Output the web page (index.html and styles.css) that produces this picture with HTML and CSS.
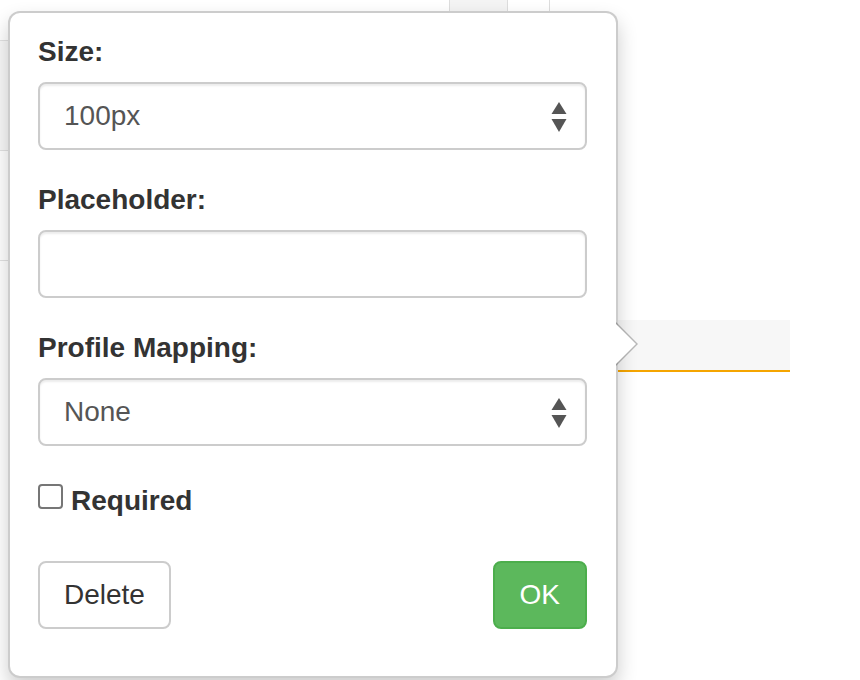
FILE: index.html
```html
<!DOCTYPE html>
<html lang="en">
<head>
<meta charset="utf-8">
<title>Field settings</title>
<link rel="stylesheet" href="styles.css">
</head>
<body>
<div class="app">
  <div class="toolbar">
    <div class="toolbar-space"></div>
    <div class="tool tool-active"></div>
    <div class="tool"></div>
    <div class="toolbar-rest"></div>
  </div>
  <div class="workspace">
    <div class="sidebar">
      <div class="side-item"></div>
      <div class="side-item"></div>
    </div>
    <div class="canvas">
      <div class="field-row"></div>
    </div>
  </div>

  <div class="popover">
    <span class="arrow"></span>
    <span class="arrow-inner"></span>
    <form class="popover-content">
      <div class="form-group">
        <label class="control-label">Size:</label>
        <div class="select">
          <span>100px</span>
          <svg class="spinner" width="16" height="30" viewBox="0 0 16 30" aria-hidden="true">
            <path d="M8 0 L15.5 12 L0.5 12 Z" fill="#555"/>
            <path d="M0.5 17 L15.5 17 L8 30 Z" fill="#555"/>
          </svg>
        </div>
      </div>
      <div class="form-group">
        <label class="control-label">Placeholder:</label>
        <div class="input"></div>
      </div>
      <div class="form-group">
        <label class="control-label">Profile Mapping:</label>
        <div class="select">
          <span>None</span>
          <svg class="spinner" width="16" height="30" viewBox="0 0 16 30" aria-hidden="true">
            <path d="M8 0 L15.5 12 L0.5 12 Z" fill="#555"/>
            <path d="M0.5 17 L15.5 17 L8 30 Z" fill="#555"/>
          </svg>
        </div>
      </div>
      <div class="checkbox">
        <span class="check-box"></span>
        <span class="check-label">Required</span>
      </div>
      <div class="actions">
        <span class="btn btn-default">Delete</span>
        <span class="btn btn-success">OK</span>
      </div>
    </form>
  </div>
</div>
</body>
</html>
```

FILE: styles.css
```css
* {
  box-sizing: border-box;
}

html, body {
  margin: 0;
  padding: 0;
  background: #fff;
}

body {
  font-family: "Liberation Sans", Arial, sans-serif;
  color: #333;
}

.app {
  position: relative;
  width: 860px;
  height: 680px;
  overflow: hidden;
}

/* Page behind the popover */
.toolbar {
  display: flex;
  width: 600px;
  height: 41px;
  border-bottom: 1px solid #e2e2e2;
}

.toolbar-space {
  width: 449px;
}

.tool {
  width: 42px;
  border-left: 1px solid #ddd;
}

.tool-active {
  width: 58px;
  background: #f4f4f4;
}

.toolbar-rest {
  flex: 1;
  border-left: 1px solid #ddd;
}

.workspace {
  display: flex;
}

.sidebar {
  width: 400px;
}

.side-item {
  height: 110px;
  border-bottom: 1px solid #e2e2e2;
}

.side-item:first-child {
  background: #f8f8f8;
}

.canvas {
  flex: 1;
  padding-top: 279px;
  padding-right: 70px;
}

.field-row {
  height: 52px;
  background: #f7f7f7;
  border-bottom: 2px solid #f5a500;
}

/* Popover */
.popover {
  position: absolute;
  left: 8px;
  top: 11px;
  width: 610px;
  background: #fff;
  border: 2px solid rgba(0, 0, 0, 0.2);
  border-radius: 12px;
  box-shadow: 0 10px 20px rgba(0, 0, 0, 0.2);
}

.arrow,
.arrow-inner {
  position: absolute;
  width: 0;
  height: 0;
  border-style: solid;
  border-color: transparent;
  border-right-width: 0;
}

.arrow {
  top: 309px;
  right: -22px;
  border-width: 22px 0 22px 22px;
  border-left-color: rgba(0, 0, 0, 0.25);
}

.arrow-inner {
  top: 311px;
  right: -20px;
  border-width: 20px 0 20px 20px;
  border-left-color: #fff;
}

.popover-content {
  margin: 0;
  padding: 19px 29px 17px 28px;
}

.form-group {
  margin-bottom: 30px;
}

.control-label {
  display: inline-block;
  margin-bottom: 10px;
  font-size: 28px;
  line-height: 40px;
  font-weight: bold;
  color: #333;
}

.input,
.select {
  height: 68px;
  padding: 12px 24px;
  border: 2px solid #ccc;
  border-radius: 8px;
  background: #fff;
  font-size: 28px;
  line-height: 40px;
  color: #555;
  box-shadow: inset 0 2px 2px rgba(0, 0, 0, 0.075);
}

.select {
  display: flex;
  align-items: center;
  justify-content: space-between;
  padding-right: 18px;
}

.spinner {
  display: block;
  margin-top: 2px;
}

.checkbox {
  display: flex;
  align-items: flex-start;
  gap: 8px;
  margin-top: 35px;
  height: 40px;
}

.check-box {
  width: 25px;
  height: 25px;
  margin-top: 3px;
  border: 2px solid #767676;
  border-radius: 4px;
  background: #fff;
}

.check-label {
  font-size: 28px;
  line-height: 40px;
  font-weight: bold;
  color: #333;
}

.actions {
  display: flex;
  justify-content: space-between;
  margin-top: 40px;
  margin-bottom: 30px;
}

.btn {
  display: inline-block;
  height: 68px;
  padding: 12px 24px;
  border: 2px solid transparent;
  border-radius: 8px;
  font-size: 28px;
  line-height: 40px;
  text-align: center;
}

.btn-default {
  color: #333;
  background: #fff;
  border-color: #ccc;
}

.btn-success {
  color: #fff;
  background: #5cb85c;
  border-color: #4cae4c;
  padding-left: 25px;
  padding-right: 25px;
}
```
